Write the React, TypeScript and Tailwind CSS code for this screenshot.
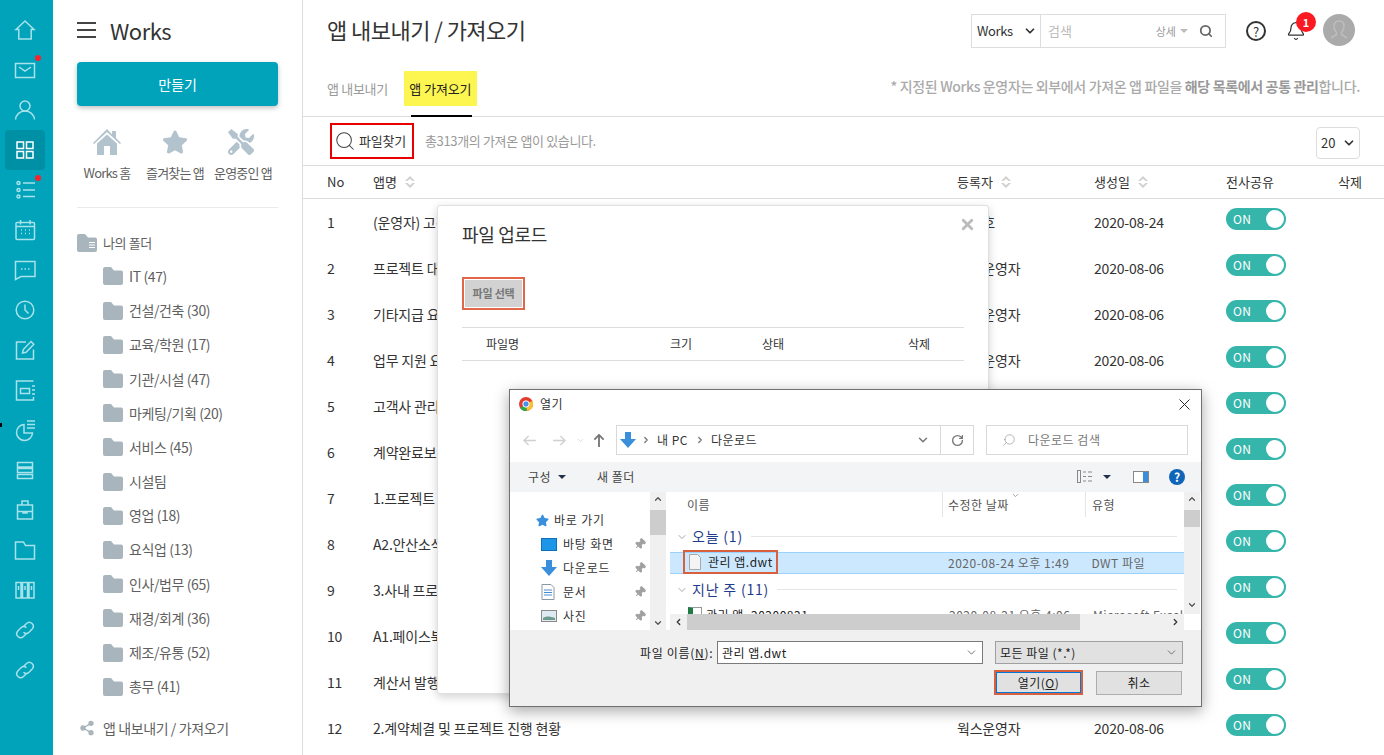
import { ReactNode } from "react";
import { Bell, ChevronDown, ChevronLeft, ChevronRight, ChevronUp, Pin, RotateCw, Search, Share2, X } from "lucide-react";
import { FaStar, FaTools } from "react-icons/fa";

const railIcons: { icon: ReactNode; dot?: boolean; active?: boolean }[] = [
  { icon: <path d="M12 3 3 11.500h2.800V21h12.400v-9.500H21z" /> },
  { icon: <><rect x="2.500" y="5.500" width="19" height="14" /><path d="m6 9 6 4 6-4" /></>, dot: true },
  { icon: <><circle cx="12" cy="8" r="5" /><path d="M2.500 21.500c.5-5 4.500-8.500 9.500-8.500s9 3.500 9.500 8.500" /></> },
  { icon: <path d="M4 4h6.500v6.500H4zM13.500 4H20v6.500h-6.500zM4 13.500h6.500V20H4zM13.500 13.500H20V20h-6.500z" />, active: true },
  { icon: <><circle cx="5.500" cy="5" r="1.500" /><circle cx="5.500" cy="12" r="1.500" /><circle cx="5.500" cy="18.500" r="1.500" /><path d="M10 5h12M10 12h12M10 18.500h12" /></>, dot: true },
  { icon: <><rect x="3" y="4.500" width="18.500" height="17" rx="1" /><path d="M7.500 2v4.500M17 2v4.500M3 8.500h18.500M8 12h1M12 12h1M16 12h1M8 15.500h1M12 15.500h1M16 15.500h1" /></> },
  { icon: <><path d="M2.500 3.500h19.500v15H8l-5.500 3z" /><path d="M8 11h1.500M11.500 11H13M15 11h1.500" /></> },
  { icon: <><circle cx="12" cy="12" r="8.800" /><path d="M12 6.500V12l3.500 3.500" /></> },
  { icon: <><path d="M13 4H3.500v17h17v-9.500" /><path d="m9.500 15 .8-3.500L18 3.500l2.800 2.800-7.700 8z" /></> },
  { icon: <><path d="M20.500 3H3.500v19h17v-3" /><path d="M7.500 10.500h9v5h-9z" /><path d="M19 8h3M19 12h3M19 16h3" /></> },
  { icon: <><path d="M11 6.500a8 8 0 1 0 8.500 8.500H11z" /><path d="M14 3h8M14 6.500h8M14 10h8" /></> },
  { icon: <path d="M4.500 4.500h15v4.500h-15zM4.500 10.500h15v4h-15zM4.500 16.500h15v4h-15z" /> },
  { icon: <><rect x="4.500" y="7" width="15" height="14" /><path d="M9 7V3h6v4M4.500 13.500h15M10 13.500v1.500h4v-1.500" /></> },
  { icon: <path d="M2.500 4h8l2 3.500h9V21h-19z" /> },
  { icon: <path d="M3 4.500h5V20H3zM9.500 4.500h5V20h-5zM16 4.500h5V20h-5zM5.500 8v4M12 8v4M18.500 8v4" /> },
  { icon: <path d="m10.500 8.500 3-3a4 4 0 0 1 5.700 5.600l-3.200 3.200a4 4 0 0 1-5.500 0M13.500 15.500l-3 3a4 4 0 0 1-5.700-5.600L8 9.700a4 4 0 0 1 5.500 0" /> },
  { icon: <path d="m10.500 8.500 3-3a4 4 0 0 1 5.700 5.600l-3.200 3.200a4 4 0 0 1-5.500 0M13.500 15.500l-3 3a4 4 0 0 1-5.700-5.600L8 9.700a4 4 0 0 1 5.500 0" /> },
];

const folders = [
  "IT (47)", "건설/건축 (30)", "교육/학원 (17)", "기관/시설 (47)", "마케팅/기획 (20)", "서비스 (45)", "시설팀",
  "영업 (18)", "요식업 (13)", "인사/법무 (65)", "재경/회계 (36)", "제조/유통 (52)", "총무 (41)",
];

const rows = [
  { name: "(운영자) 고객사 관리", owner: "김영호", date: "2020-08-24" },
  { name: "프로젝트 대시보드", owner: "웍스운영자", date: "2020-08-06" },
  { name: "기타지급 요청서", owner: "웍스운영자", date: "2020-08-06" },
  { name: "업무 지원 요청서", owner: "웍스운영자", date: "2020-08-06" },
  { name: "고객사 관리 현황", owner: "웍스운영자", date: "2020-08-06" },
  { name: "계약완료보고서", owner: "웍스운영자", date: "2020-08-06" },
  { name: "1.프로젝트 요청", owner: "웍스운영자", date: "2020-08-06" },
  { name: "A2.안산소식지", owner: "웍스운영자", date: "2020-08-06" },
  { name: "3.사내 프로젝트", owner: "웍스운영자", date: "2020-08-06" },
  { name: "A1.페이스북 광고", owner: "웍스운영자", date: "2020-08-06" },
  { name: "계산서 발행 요청", owner: "웍스운영자", date: "2020-08-06" },
  { name: "2.계약체결 및 프로젝트 진행 현황", owner: "웍스운영자", date: "2020-08-06" },
];

function FolderIcon({ lines }: { lines?: boolean }) {
  return (
    <svg viewBox="0 0 20 18" className="w-5 h-[18px] shrink-0" fill="#a9b5bd">
      <path d="M0 2a2 2 0 0 1 2-2h6l3 3.500h7a2 2 0 0 1 2 2V16a2 2 0 0 1-2 2H2a2 2 0 0 1-2-2z" />
      {lines && <path d="M12 8.500h6M12 11h6M12 13.500h6" stroke="#fff" strokeWidth="1" />}
    </svg>
  );
}

function SortArrows() {
  return (
    <svg viewBox="0 0 10 12" className="w-[10px] h-3 ml-2" fill="#d0d0d0">
      <path d="M5 0 10 5H7.500L5 2.800 2.500 5H0zM5 12 0 7h2.500L5 9.200 7.500 7H10z" />
    </svg>
  );
}

function Toggle() {
  return (
    <div className="w-[60px] h-[22px] rounded-full bg-[#36b5aa] flex items-center justify-between pl-[7px] pr-[2px]">
      <span className="text-[12px] leading-none text-white tracking-wide">ON</span>
      <span className="w-[18px] h-[18px] rounded-full bg-white" />
    </div>
  );
}

function Rail() {
  return (
    <aside className="w-[53px] shrink-0 bg-[#00a3ba] flex flex-col items-start pl-[5px] pt-[10px]">
      {railIcons.map((item, i) => (
        <div key={i} className={`relative w-10 h-10 shrink-0 rounded flex items-center justify-center ${item.active ? "bg-[#0090a5]" : ""}`}>
          <svg viewBox="0 0 24 24" fill="none" strokeWidth="1.500" stroke={item.active ? "#ffffff" : "#a8e2ea"} className="w-6 h-6">
            {item.icon}
          </svg>
          {item.dot && <span className="absolute right-[4px] top-[5px] w-[6px] h-[6px] rounded-full bg-[#f8232f]" />}
        </div>
      ))}
    </aside>
  );
}

function Sidebar() {
  return (
    <nav className="w-[250px] shrink-0 border-r border-[#dcdcdc] px-6 text-[#5f5f5f]">
      <div className="h-[62px] flex items-center gap-[14px] pb-[3px]">
        <div className="w-[19px] flex flex-col gap-[5px]">
          <span className="h-[2px] bg-[#444]" />
          <span className="h-[2px] bg-[#444]" />
          <span className="h-[2px] bg-[#444]" />
        </div>
        <span className="text-[22px] leading-none text-[#333] tracking-[-0.5px]">Works</span>
      </div>
      <button className="w-[201px] h-11 rounded bg-[#00a3ba] text-white text-[14px] shadow-[0_2px_5px_rgba(0,0,0,0.25)]">만들기</button>
      <div className="w-[201px] mt-[23px] border-b border-[#e8eaec] pb-[24px]">
        <div className="flex justify-between w-[198px] -ml-[1px]">
          <div className="flex flex-col items-center w-[62px] gap-[8px]">
            <svg viewBox="0 0 28 26" className="w-[28px] h-[26px]" fill="#b2c3ce">
              <path d="M14 0 0 14l1 1L14 3l13 12 1-1-5-5V2h-4v3.500zM4 14.500 14 5.500l10 9V26h-7v-9h-6v9H4z" />
            </svg>
            <span className="text-[13px] leading-5 tracking-[-0.8px] whitespace-nowrap">Works 홈</span>
          </div>
          <div className="flex flex-col items-center w-[62px] gap-[8px]">
            <FaStar className="text-[#b2c3ce] w-[26px] h-[26px]" />
            <span className="text-[13px] leading-5 tracking-[-0.8px] whitespace-nowrap">즐겨찾는 앱</span>
          </div>
          <div className="flex flex-col items-center w-[62px] gap-[8px]">
            <FaTools className="text-[#b2c3ce] w-[26px] h-[26px] -ml-[4px]" />
            <span className="text-[13px] leading-5 tracking-[-0.8px] whitespace-nowrap">운영중인 앱</span>
          </div>
        </div>
      </div>
      <div className="flex items-center gap-[6px] mt-[25px] h-5 text-[13px]">
        <FolderIcon lines />
        <span className="tracking-[-0.4px]">나의 폴더</span>
      </div>
      <ul className="pl-[26px] mt-[6.4px]">
        {folders.map((f) => (
          <li key={f} className="h-[34.2px] flex items-center gap-[6px] text-[14px] tracking-[-0.4px]">
            <FolderIcon />
            <span>{f}</span>
          </li>
        ))}
      </ul>
      <div className="flex items-center gap-[8px] mt-[14px] pl-[2px] text-[14px] tracking-[-0.4px]">
        <Share2 className="w-4 h-4 text-[#a9b5bd] fill-[#a9b5bd]" />
        <span>앱 내보내기 / 가져오기</span>
      </div>
    </nav>
  );
}

function TopBar() {
  return (
    <div className="h-[70px] pl-6 pr-[29px] pt-[14px] flex items-start justify-between">
      <h1 className="text-[22px] leading-[30px] text-[#333] tracking-[-0.55px]">앱 내보내기 / 가져오기</h1>
      <div className="flex items-center">
        <div className="w-[255px] h-[34px] border border-[#ddd] flex items-center text-[13px]">
          <div className="w-[69px] h-full border-r border-[#ddd] flex items-center justify-between pl-[5px] pr-[3px] text-[#333]">
            <span className="tracking-[-0.4px]">Works</span>
            <ChevronDown className="w-[14px] h-[14px] text-[#333]" strokeWidth={3} />
          </div>
          <span className="ml-[7px] text-[#bbb]">검색</span>
          <span className="ml-auto text-[11px] text-[#999]">상세</span>
          <span className="ml-[4px] border-x-[4px] border-t-[4px] border-x-transparent border-t-[#bbb]" />
          <Search className="w-[14px] h-[14px] ml-[11px] mr-[12px] text-[#666]" strokeWidth={3} />
        </div>
        <div className="ml-[20px] w-5 h-5 rounded-full border-2 border-[#333] flex items-center justify-center text-[13px] leading-none text-[#333]">?</div>
        <div className="relative ml-[20px]">
          <Bell className="w-5 h-5 text-[#333]" strokeWidth={1.500} />
          <span className="absolute -right-[10px] -top-[9px] w-5 h-5 rounded-full bg-[#fb1a22] text-white text-[11px] font-bold flex items-center justify-center">1</span>
        </div>
        <div className="ml-[17px] -mt-[2px] w-8 h-8 rounded-full bg-[#aaa] flex items-center justify-center">
          <svg viewBox="0 0 32 32" className="w-8 h-8" fill="none" stroke="#bdbdbd" strokeWidth="1.500">
            <path d="M16 7c-3.500 0-5 2.500-5 5.500 0 2.500 1 4.500 2.500 6v2L8 24M16 7c3.500 0 5 2.500 5 5.500 0 2.500-1 4.500-2.500 6v2L24 24" />
          </svg>
        </div>
      </div>
    </div>
  );
}

function Tabs() {
  return (
    <div className="h-[47px] border-b border-[#ddd] pl-6 pr-6 flex items-start text-[13px]">
      <span className="h-[36px] mt-[1px] flex items-center text-[#999] tracking-[-0.3px]">앱 내보내기</span>
      <div className="relative ml-[16px] mt-[1px] w-[73px] h-[35px] bg-[#fdf650] flex items-center justify-center text-[#222] tracking-[-0.1px]">
        앱 가져오기
        <span className="absolute left-[7px] -bottom-[11px] w-[61px] h-[2px] bg-black" />
      </div>
      <p className="ml-auto text-[14px] mt-[6px] text-[#aaa] font-medium tracking-[-0.35px]">
        * 지정된 Works 운영자는 외부에서 가져온 앱 파일을 <b className="font-bold text-[#999]">해당 목록에서 공통 관리</b>합니다.
      </p>
    </div>
  );
}

function Toolbar() {
  return (
    <div className="h-[49px] border-b border-[#ddd] pl-[27px] pr-6 flex items-center">
      <div className="w-[84px] h-9 border-2 border-[#e80000] flex items-center pl-[2px] gap-[3px] text-[13px] text-[#333] tracking-[-0.2px]">
        <Search className="w-[22px] h-[22px] text-[#444]" strokeWidth={1.100} />
        <span>파일찾기</span>
      </div>
      <span className="ml-[11px] text-[13px] text-[#999] tracking-[-0.35px]">총313개의 가져온 앱이 있습니다.</span>
      <div className="ml-auto mt-[4px] w-[44px] h-[32px] border border-[#ddd] rounded-sm flex items-center justify-between pl-[4px] pr-[3px] text-[13px] text-[#333]">
        20
        <ChevronDown className="w-[14px] h-[14px]" strokeWidth={3} />
      </div>
    </div>
  );
}

function AppTable() {
  return (
    <div className="text-[#333] text-[14px]">
      <div className="h-[33px] border-b border-[#ddd] flex items-center pl-6 text-[13px] pb-[1px]">
        <span className="w-[46px]">No</span>
        <span className="w-[584px] flex items-center">앱명<SortArrows /></span>
        <span className="w-[137px] flex items-center">등록자<SortArrows /></span>
        <span className="w-[132px] flex items-center">생성일<SortArrows /></span>
        <span className="w-[112px]">전사공유</span>
        <span>삭제</span>
      </div>
      {rows.map((r, i) => (
        <div key={i} className="h-[46px] flex items-center pl-6 tracking-[-0.2px]">
          <span className="w-[46px]">{i + 1}</span>
          <span className="w-[584px]">{r.name}</span>
          <span className="w-[137px]">{r.owner}</span>
          <span className="w-[132px]">{r.date}</span>
          <div className="-mt-[6px]"><Toggle /></div>
        </div>
      ))}
    </div>
  );
}

function UploadModal() {
  return (
    <div className="absolute left-[437px] top-[205px] w-[552px] h-[489px] bg-white border border-[#e0e0e0] rounded-[3px] shadow-[0_3px_10px_rgba(0,0,0,0.18)] px-6 text-[#333]">
      <X className="absolute right-[12px] top-[10px] w-[17px] h-[17px] text-[#bbb]" strokeWidth={4} />
      <h2 className="mt-[15px] text-[18px] leading-[26px] tracking-[-0.3px]">파일 업로드</h2>
      <div className="mt-[30px] w-[63px] h-[33px] border-2 border-[#e0674a] p-[1px]">
        <div className="w-full h-full bg-[#d2d2d2] flex items-center justify-center text-[11px] font-bold text-[#777] tracking-[-0.2px]">파일 선택</div>
      </div>
      <div className="mt-[17px] w-[502px] h-[34px] border-y border-[#ddd] flex items-center pl-6 text-[12px]">
        <span className="w-[184px]">파일명</span>
        <span className="w-[92px]">크기</span>
        <span className="w-[146px]">상태</span>
        <span>삭제</span>
      </div>
    </div>
  );
}

function PinIcon() {
  return <Pin className="w-3 h-3 text-[#a0a0a0] fill-[#a0a0a0] rotate-45" />;
}

const treeItems: { label: string; icon: ReactNode }[] = [
  { label: "바탕 화면", icon: <span className="w-4 h-[13px] bg-[#1e96e8] border border-[#0f6fb8]" /> },
  {
    label: "다운로드",
    icon: <svg viewBox="0 0 16 16" className="w-4 h-4" fill="#3a8fdd"><path d="M5 0h6v7h5l-8 9-8-9h5z" /></svg>,
  },
  {
    label: "문서",
    icon: (
      <svg viewBox="0 0 14 16" className="w-[14px] h-4" fill="#fff" stroke="#8a98a5">
        <path d="M1 .5h9l3 3v12H1z" />
        <path d="M3 6h8M3 8.500h8M3 11h8" stroke="#4a8cc9" />
      </svg>
    ),
  },
  {
    label: "사진",
    icon: (
      <svg viewBox="0 0 16 12" className="w-4 h-3">
        <rect x=".5" y=".5" width="15" height="11" fill="#dfe9f2" stroke="#8a8a8a" />
        <path d="M2 8c3-2 6-2 12 0v2H2z" fill="#6d9a8c" />
      </svg>
    ),
  },
];

function OpenDialog() {
  return (
    <div className="absolute left-[509px] top-[389px] w-[693px] h-[318px] bg-white border border-[#707070] shadow-[0_4px_14px_rgba(0,0,0,0.35)] flex flex-col text-[12px] text-[#333] tracking-[0.5px] overflow-hidden">
      {/* title bar */}
      <div className="h-[35px] pb-[7px] shrink-0 flex items-center pl-[9px] pr-[7px]">
        <svg viewBox="0 0 14 14" className="w-[14px] h-[14px]">
          <circle cx="7" cy="7" r="7" fill="#e33b2e" />
          <path d="M7 7 1 11a7 7 0 0 0 7 3z" fill="#2fa84f" />
          <path d="M7 7 8 14a7 7 0 0 0 6-7V3.500z" fill="#fbc02d" />
          <circle cx="7" cy="7" r="3.200" fill="#4a8ef0" stroke="#fff" />
        </svg>
        <span className="ml-[7px]">열기</span>
        <X className="ml-auto w-[19px] h-[19px] text-[#222]" strokeWidth={1.200} />
      </div>
      {/* address row */}
      <div className="h-[37px] shrink-0 flex items-start pl-[13px]">
        <div className="w-[93px] h-[30px] flex items-center text-[#d0d0d0] gap-[17px]">
          <svg viewBox="0 0 14 12" className="w-[13px] h-[11px]" fill="none" stroke="currentColor" strokeWidth="1.500"><path d="M14 6H1M6 1 1 6l5 5" /></svg>
          <svg viewBox="0 0 14 12" className="w-[13px] h-[11px]" fill="none" stroke="currentColor" strokeWidth="1.500"><path d="M0 6h13M8 1l5 5-5 5" /></svg>
          <ChevronDown className="-ml-[7px] w-[9px] h-[9px]" />
          <svg viewBox="0 0 12 14" className="-ml-[9px] w-[12px] h-[13px] text-[#777]" fill="none" stroke="currentColor" strokeWidth="2"><path d="M6 14V1M1 6l5-5 5 5" /></svg>
        </div>
        <div className="w-[358px] h-[30px] border border-[#d9d9d9] flex items-center">
          <svg viewBox="0 0 16 16" className="w-4 h-4 ml-[3px]" fill="#3a8fdd"><path d="M5 0h6v7h5l-8 9-8-9h5z" /></svg>
          <ChevronRight className="ml-[5px] w-[10px] h-[10px] text-[#777]" strokeWidth={3} />
          <span className="ml-[6px]">내 PC</span>
          <ChevronRight className="ml-[7px] w-[10px] h-[10px] text-[#777]" strokeWidth={3} />
          <span className="ml-[6px]">다운로드</span>
          <ChevronDown className="ml-auto mr-[10px] w-[14px] h-[14px] text-[#777]" strokeWidth={2.500} />
          <div className="w-[33px] h-full border-l border-[#d9d9d9] flex items-center justify-center">
            <RotateCw className="w-[13px] h-[13px] text-[#777]" strokeWidth={2.500} />
          </div>
        </div>
        <div className="ml-[12px] w-[202px] h-[30px] border border-[#d9d9d9] flex items-center pl-[15px] text-[#777]">
          <Search className="w-[14px] h-[14px] -scale-x-100 text-[#999]" strokeWidth={1.200} />
          <span className="ml-[12px]">다운로드 검색</span>
        </div>
      </div>
      {/* command bar */}
      <div className="h-[30px] shrink-0 bg-[#f3f4f6] flex items-center pl-[18px] pr-[16px] pb-[1px] text-[#444]">
        <span>구성</span>
        <span className="ml-[7px] border-x-[4px] border-t-[4px] border-x-transparent border-t-[#22304a]" />
        <span className="ml-[31px]">새 폴더</span>
        <svg viewBox="0 0 16 13" className="ml-auto w-4 h-[13px]" fill="none" stroke="#888"><rect x=".5" y=".5" width="3" height="12" /><path d="M6 2h3M11 2h4M6 6.500h3M11 6.500h4M6 11h3M11 11h4" /></svg>
        <span className="ml-[10px] border-x-[4px] border-t-[4px] border-x-transparent border-t-[#22304a]" />
        <div className="ml-[22px] w-4 h-[12px] border border-[#888] flex justify-end bg-white"><span className="w-[5px] h-full bg-[#3a8fdd]" /></div>
        <span className="ml-[20px] w-4 h-4 rounded-full bg-[#0f66b8] text-white text-[12px] font-bold flex items-center justify-center tracking-normal">?</span>
      </div>
      {/* panes */}
      <div className="h-[138px] shrink-0 flex overflow-hidden">
        <div className="w-[140px] shrink-0 pl-[26px] pt-[17px] tracking-[0.8px]">
          <div className="h-[24px] flex items-center gap-[5px] -mt-[1px]">
            <FaStar className="w-[13px] h-[13px] text-[#3a8fdd]" />
            <span>바로 가기</span>
          </div>
          {treeItems.map((t) => (
            <div key={t.label} className="h-[24px] flex items-center pl-[5px]">
              <span className="w-[22px] flex items-center">{t.icon}</span>
              <span>{t.label}</span>
              <span className="ml-auto mr-[4px]"><PinIcon /></span>
            </div>
          ))}
        </div>
        <div className="w-[16px] shrink-0 bg-[#f0f0f0] flex flex-col items-center">
          <ChevronUp className="w-[10px] h-[14px] text-[#555]" strokeWidth={3} />
          <div className="w-full h-[25px] mt-[4px] bg-[#cdcdcd]" />
          <ChevronDown className="mt-auto w-[10px] h-[14px] text-[#555]" strokeWidth={3} />
        </div>
        <div className="w-[4px] shrink-0" />
        <div className="flex-1 min-w-0 flex flex-col pr-[1px]">
          <div className="flex-1 min-h-0 flex">
            <div className="flex-1 min-w-0 overflow-hidden">
              <div className="h-[25px] flex items-center text-[#555]">
                <span className="w-[272px] pl-[17px]">이름</span>
                <div className="relative w-[143px] h-full border-l border-[#e5e5e5] pl-[5px] flex items-center">
                  수정한 날짜
                  <ChevronDown className="absolute left-[68px] -top-[1px] w-[9px] h-[9px] text-[#888]" />
                </div>
                <span className="h-full border-l border-[#e5e5e5] pl-[6px] flex items-center">유형</span>
              </div>
              <div className="h-[35px] flex items-end pb-[7px] pl-[6px] text-[14px] text-[#1f3c8c] tracking-[0.8px]">
                <ChevronDown className="w-[12px] h-[12px] text-[#888] mb-[2px]" strokeWidth={1.500} />
                <span className="ml-[4px] leading-[18px]">오늘 (1)</span>
                <span className="ml-[8px] flex-1 mr-[7px] h-px bg-[#e5e5e5] mb-[8px]" />
              </div>
              <div className="relative h-[22px] bg-[#cce8ff] border-y border-[#99d1ff] flex items-center text-[#666]">
                <div className="absolute left-[13px] -top-[3px] w-[95px] h-[24px] border-2 border-[#d9603f] flex items-center pl-[4px] text-[#222]">
                  <svg viewBox="0 0 12 16" className="w-3 h-4 shrink-0" fill="#f4f4f4" stroke="#a8a8a8"><path d="M.5.5h8l3 3v12H.5z" /></svg>
                  <span className="ml-[7px] whitespace-nowrap">관리 앱.dwt</span>
                </div>
                <span className="ml-[278px] whitespace-nowrap">2020-08-24 오후 1:49</span>
                <span className="ml-[22px] whitespace-nowrap">DWT 파일</span>
              </div>
              <div className="h-[32px] flex items-end pb-[8px] pl-[6px] text-[14px] text-[#1f3c8c] tracking-[0.8px]">
                <ChevronDown className="w-[12px] h-[12px] text-[#888] mb-[2px]" strokeWidth={1.500} />
                <span className="ml-[4px] leading-[18px]">지난 주 (11)</span>
                <span className="ml-[8px] flex-1 mr-[7px] h-px bg-[#e5e5e5] mb-[8px]" />
              </div>
              <div className="h-[18px] flex items-center text-[#666]">
                <span className="ml-[18px] w-[14px] h-4 border border-[#999] border-l-[5px] border-l-[#1f7a45] shrink-0" />
                <span className="ml-[4px] w-[243px] text-[#222] whitespace-nowrap">관리 앱_20200821</span>
                <span className="w-[144px] whitespace-nowrap">2020-08-21 오후 4:06</span>
                <span className="whitespace-nowrap">Microsoft Excel</span>
              </div>
            </div>
            <div className="w-[16px] shrink-0 bg-[#f0f0f0] flex flex-col items-center">
              <ChevronUp className="w-[10px] h-[14px] text-[#555]" strokeWidth={3} />
              <div className="w-full h-[17px] mt-[4px] bg-[#cdcdcd]" />
              <ChevronDown className="mt-auto mb-[2px] w-[10px] h-[14px] text-[#555]" strokeWidth={3} />
            </div>
          </div>
          <div className="h-[16px] shrink-0 flex items-center mr-[16px] bg-[#f0f0f0]">
            <ChevronLeft className="w-[17px] h-[10px] text-[#333]" strokeWidth={3} />
            <div className="w-[393px] h-full bg-[#cdcdcd]" />
            <ChevronRight className="ml-auto w-[17px] h-[10px] text-[#333]" strokeWidth={3} />
          </div>
        </div>
      </div>
      {/* file name and buttons */}
      <div className="flex-1 bg-[#f0f0f0] pt-[11px]">
        <div className="flex items-center h-[23px]">
          <span className="ml-[130px] w-[77px] text-[#222] whitespace-nowrap tracking-[0.7px]">파일 이름(<u>N</u>):</span>
          <div className="w-[266px] h-[23px] border border-[#7a7a7a] bg-white flex items-center pl-[4px] text-[#222]">
            관리 앱.dwt
            <ChevronDown className="ml-auto mr-[4px] w-[13px] h-[13px] text-[#555]" strokeWidth={1.500} />
          </div>
          <div className="ml-[12px] w-[188px] h-[23px] border border-[#a0a0a0] bg-[#e1e1e1] flex items-center pl-[4px] text-[#222]">
            모든 파일 (*.*)
            <ChevronDown className="ml-auto mr-[4px] w-[13px] h-[13px] text-[#555]" strokeWidth={1.500} />
          </div>
        </div>
        <div className="flex mt-[6px] ml-[484px]">
          <div className="w-[89px] h-[25px] border-2 border-[#d9603f]">
            <div className="w-full h-full border border-[#0078d7] bg-[#e1e1e1] flex items-center justify-center text-[#222]">
              열기(<u>O</u>)
            </div>
          </div>
          <div className="ml-[13px] mt-[1px] w-[86px] h-[24px] border border-[#adadad] bg-[#e1e1e1] flex items-center justify-center text-[#222]">취소</div>
        </div>
      </div>
    </div>
  );
}

export default function App() {
  return (
    <div className="relative w-[1384px] h-[755px] overflow-hidden bg-white flex font-['Noto_Sans_CJK_KR',sans-serif]">
      <Rail />
      <Sidebar />
      <main className="flex-1 min-w-0">
        <TopBar />
        <Tabs />
        <Toolbar />
        <AppTable />
      </main>
      <UploadModal />
      <OpenDialog />
      <span className="absolute left-0 top-[423px] w-[2px] h-[4px] bg-black" />
    </div>
  );
}
